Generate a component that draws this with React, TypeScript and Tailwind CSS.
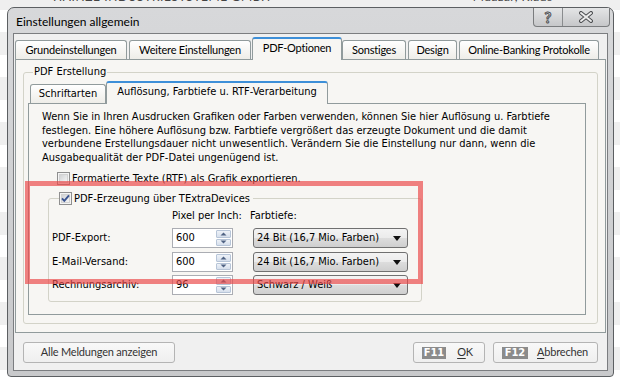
const ui = "font-['Lato','Liberation_Sans',sans-serif]";
const tah = "font-['DejaVu_Sans_Condensed','Liberation_Sans',sans-serif]";

function Check({ checked }: { checked?: boolean }) {
  return (
    <svg width="13" height="13" viewBox="0 0 13 13" className="shrink-0">
      <defs>
        <linearGradient id="cb" x1="0" y1="0" x2="1" y2="1">
          <stop offset="0" stopColor="#cfd0d2" />
          <stop offset="1" stopColor="#f7f7f7" />
        </linearGradient>
      </defs>
      <rect x="0.5" y="0.5" width="12" height="12" fill="#f4f4f4" stroke="#8f8f8f" />
      <rect x="2.5" y="2.5" width="8" height="8" fill="url(#cb)" stroke="#d2d2d2" />
      {checked && (
        <path d="M3 6.3 L5.3 8.8 L10 3.4" fill="none" stroke="#3a5390" strokeWidth="1.9" />
      )}
    </svg>
  );
}

function Spin({ value }: { value: string }) {
  return (
    <div className="flex h-[20px] w-[61px] border border-[#abadb3] bg-white">
      <div className="flex-1 pl-[3px] leading-[18px]">{value}</div>
      <div className="flex w-[16px] flex-col gap-[1px] py-[1px] pr-[1px]">
        {[0, 1].map((i) => (
          <div key={i} className="flex flex-1 items-center justify-center rounded-[1px] border border-[#b7c5d8] bg-gradient-to-b from-[#eef2f8] to-[#d6dfec]">
            <svg width="7" height="4" viewBox="0 0 7 4">
              <path d={i === 0 ? "M0.5 3.5 L3.5 0.5 L6.5 3.5 Z" : "M0.5 0.5 L6.5 0.5 L3.5 3.5 Z"} fill="#4f6283" />
            </svg>
          </div>
        ))}
      </div>
    </div>
  );
}

function Combo({ text }: { text: string }) {
  return (
    <div className="flex h-[20px] w-[155px] items-center rounded-[3px] border border-[#707070] bg-[linear-gradient(#f3f3f3_0%,#ebebeb_50%,#dddddd_50%,#cfcfcf_100%)] pl-[3px] pr-[6px]">
      <span className="flex-1 leading-[18px]">{text}</span>
      <svg width="8" height="5" viewBox="0 0 8 5">
        <path d="M0 0 H8 L4 5 Z" fill="#111" />
      </svg>
    </div>
  );
}

function Tab({ label, w, ml, active }: { label: string; w: string; ml: string; active?: boolean }) {
  return active ? (
    <div className={`${w} ${ml} relative z-10 -mb-[1px] flex h-[23px] items-center justify-center whitespace-nowrap rounded-t-[3px] border-x border-t-2 border-x-[#919b9c] border-t-[#3d8fd8] bg-[#f7f6f3] pb-[2px]`}>
      {label}
    </div>
  ) : (
    <div className={`${w} ${ml} flex h-[19px] items-center justify-center whitespace-nowrap rounded-t-[3px] border-x border-t border-[#919b9c] bg-gradient-to-b from-white to-[#eeede8]`}>
      {label}
    </div>
  );
}

function FButton({ k, label, u, w, badge }: { k: string; label: string; u: string; w: string; badge: string }) {
  return (
    <div className={`${w} flex h-[21px] items-center rounded-[3px] border border-[#b4b4b4] bg-gradient-to-b from-[#f8f8f8] to-[#efefef] pl-[8px] text-[#333]`}>
      <span className={`${badge} flex h-[12px] items-center justify-center bg-[#8b8b8b] text-[11px] font-bold leading-[12px] tracking-normal text-white ${tah}`}>{k}</span>
      <span className="flex-1 text-center">
        <span className="underline underline-offset-[2px]">{u}</span>
        {label}
      </span>
    </div>
  );
}

export default function App() {
  return (
    <div className={`h-[383px] w-[620px] overflow-hidden bg-[repeating-linear-gradient(#efefef_0_10px,#ffffff_10px_32px,#efefef_32px_45px)] text-[12px] text-black ${ui}`}>
      <div className="h-[7px] overflow-hidden">
        <div className="-mt-[9px] flex leading-[12px] text-[#444]">
          <span className="ml-[53px] tracking-[0.6px]">HAINZE INDUSTRIESYSTEME GMBH</span>
          <span className="ml-[202px] tracking-[0.5px]">Muazar, Klaus</span>
        </div>
      </div>

      <div className="ml-[7px] flex h-[370px] w-[607px] flex-col rounded-t-[7px] rounded-b-[4px] border border-[#5c5f62] bg-gradient-to-b from-[#d7d8da] to-[#c8c9cb] px-[5px] pb-[5px]">
        {/* title bar */}
        <div className="flex h-[25px] items-start">
          <span className="ml-[3px] pt-[6px] leading-[15px]">Einstellungen allgemein</span>
          <div className="-mr-[2px] ml-auto flex h-[19px] overflow-hidden rounded-b-[4px] border-x border-b border-[#7a7c7e] bg-gradient-to-b from-[#e4e5e6] to-[#c6c7c9]">
            <div className="flex w-[29px] items-center justify-center border-r border-[#8a8c8e] text-[15px] font-bold leading-[15px] text-[#e8e8e8] [-webkit-text-stroke:1px_#4d4f52]">
              ?
            </div>
            <div className="flex w-[46px] items-center justify-center">
              <svg width="16" height="12" viewBox="0 0 16 12">
                <path d="M3 2 L13 10 M13 2 L3 10" stroke="#4d4f52" strokeWidth="4" strokeLinecap="round" />
                <path d="M3 2 L13 10 M13 2 L3 10" stroke="#ececec" strokeWidth="2" strokeLinecap="round" />
              </svg>
            </div>
          </div>
        </div>

        {/* client */}
        <div className="flex flex-1 flex-col border border-[#7b7d80] bg-[#f0f0f0]">
          <div className="flex h-[25px] items-end pl-[1px] text-[11px] tracking-[-0.2px]">
            <Tab label="Grundeinstellungen" w="w-[112px]" ml="ml-0" />
            <Tab label="Weitere Einstellungen" w="w-[122px]" ml="ml-[2px]" />
            <Tab label="PDF-Optionen" w="w-[90px]" ml="ml-[1px]" active />
            <Tab label="Sonstiges" w="w-[64px]" ml="ml-0" />
            <Tab label="Design" w="w-[49px]" ml="ml-[2px]" />
            <Tab label="Online-Banking Protokolle" w="w-[140px]" ml="ml-[2px]" />
          </div>

          <div className={`mx-[1px] h-[274px] border border-[#919b9c] bg-[#f7f6f3] px-[7px] pt-[5px] text-[11px] ${tah}`}>
            <fieldset className="h-[259px] rounded-[3px] border border-[#d3d3c8] pl-[4px] pr-[11px]">
              <legend className="ml-[5px] px-[1px] leading-[14px]">PDF Erstellung</legend>
              <div className="flex h-[24px] items-end pl-[2px]">
                <Tab label="Schriftarten" w="w-[76px]" ml="ml-0" />
                <Tab label="Auflösung, Farbtiefe u. RTF-Verarbeitung" w="w-[222px]" ml="ml-0" active />
              </div>
              <div className="relative h-[212px] border border-[#919b9c] bg-[#f7f6f3]">
                <p className="whitespace-nowrap pl-[13px] pt-[6px] leading-[13.5px]">
                  Wenn Sie in Ihren Ausdrucken Grafiken oder Farben verwenden, können Sie hier Auflösung u. Farbtiefe
                  <br />
                  festlegen. Eine höhere Auflösung bzw. Farbtiefe vergrößert das erzeugte Dokument und die damit
                  <br />
                  verbundene Erstellungsdauer nicht unwesentlich. Verändern Sie die Einstellung nur dann, wenn die
                  <br />
                  Ausgabequalität der PDF-Datei ungenügend ist.
                </p>
                <div className="ml-[28px] mt-[8px] flex h-[13px] items-center gap-[2px] leading-[13px]">
                  <Check />
                  <span>Formatierte Texte (RTF) als Grafik exportieren.</span>
                </div>

                <fieldset className="ml-[19px] mt-[7px] w-[374px] rounded-[3px] border border-[#d3d3c8] pb-[6px] pl-[3px]">
                  <legend className="ml-[7px] flex items-center gap-[2px] pr-[3px] leading-[13px]">
                    <Check checked />
                    <span>PDF-Erzeugung über TExtraDevices</span>
                  </legend>
                  <div className="mt-[4px] flex h-[13px] leading-[13px]">
                    <span className="w-[120px]" />
                    <span className="w-[78px]">Pixel per Inch:</span>
                    <span>Farbtiefe:</span>
                  </div>
                  {[
                    ["PDF-Export:", "600", "24 Bit (16,7 Mio. Farben)", "mt-[6px]"],
                    ["E-Mail-Versand:", "600", "24 Bit (16,7 Mio. Farben)", "mt-[4px]"],
                    ["Rechnungsarchiv:", "96", "Schwarz / Weiß", "mt-[3px]"],
                  ].map(([l, v, c, m]) => (
                    <div key={l} className={`${m} flex h-[20px] items-center`}>
                      <span className="w-[120px]">{l}</span>
                      <Spin value={v} />
                      <span className="w-[20px]" />
                      <Combo text={c} />
                    </div>
                  ))}
                </fieldset>

                <div className="absolute -left-[4px] top-[77px] h-[103px] w-[398px] border-[5px] border-[rgba(234,72,72,0.68)]" />
              </div>
            </fieldset>
          </div>

          <div className="flex flex-1 items-start gap-[8px] px-[9px] pt-[9px] text-[11px] tracking-[-0.2px]">
            <div className="flex h-[21px] w-[152px] items-center justify-center rounded-[3px] border border-[#b4b4b4] bg-gradient-to-b from-[#f8f8f8] to-[#efefef] text-[#333]">
              Alle Meldungen anzeigen
            </div>
            <div className="ml-auto" />
            <FButton k="F11" u="O" label="K" w="w-[72px]" badge="w-[24px]" />
            <FButton k="F12" u="A" label="bbrechen" w="w-[105px]" badge="w-[26px]" />
          </div>
        </div>
      </div>
    </div>
  );
}
